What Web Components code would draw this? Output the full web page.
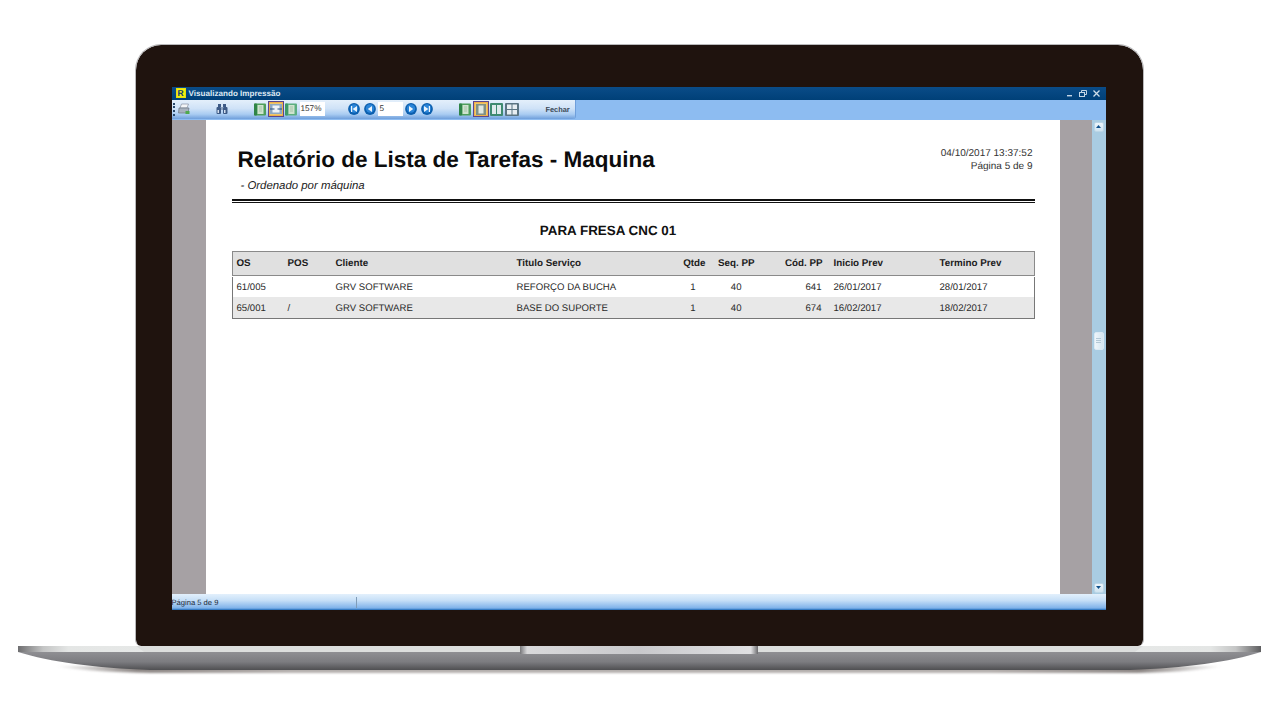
<!DOCTYPE html>
<html lang="pt">
<head>
<meta charset="utf-8">
<title>Visualizando Impressão</title>
<style>
  html, body { margin: 0; padding: 0; background: #fff; overflow: hidden; }
  body {
    width: 1280px;
    height: 720px;
    font-family: "Liberation Sans", Arial, sans-serif;
    text-rendering: geometricPrecision;
  }
</style>
</head>
<body>
<laptop-frame>
  <preview-window>
    <title-bar slot="title" label="Visualizando Impressão"></title-bar>
    <print-toolbar slot="toolbar"></print-toolbar>
    <report-page>
      <report-table></report-table>
    </report-page>
    <status-bar slot="status" text="Página 5 de 9"></status-bar>
  </preview-window>
</laptop-frame>

<script>
// Laptop body: bezel holding the screen, silver base under it
class LaptopFrame extends HTMLElement {
  constructor() {
    super();
    this.attachShadow({ mode: "open" });
    this.shadowRoot.innerHTML = `
      <style>
        :host { display: block; padding-top: 44px; }
        .bezel {
          box-sizing: border-box;
          width: 1009px;
          height: 602px;
          margin-left: 135px;
          padding: 43px 38px 0 37px;
          background: #1f130e;
          border: solid #b9b9bb;
          border-width: 1.5px 1.5px 0 1.5px;
          border-radius: 26px 26px 6px 6px;
          background-clip: padding-box;
        }
        .inner { margin: -1.5px -1.5px 0 -1.5px; }
        svg { display: block; }
      </style>
      <div class="bezel"><div class="inner"><slot></slot></div></div>
      <svg width="1280" height="30" viewBox="0 0 1280 30">
        <defs>
          <linearGradient id="body" x1="0" y1="0" x2="0" y2="1">
            <stop offset="0" stop-color="#8f8f93"/>
            <stop offset="0.55" stop-color="#7c7c80"/>
            <stop offset="1" stop-color="#4f4f52"/>
          </linearGradient>
          <linearGradient id="endL" x1="0" y1="0" x2="1" y2="0">
            <stop offset="0" stop-color="#6e6e70"/>
            <stop offset="0.2" stop-color="#c4c5c5"/>
            <stop offset="0.4" stop-color="#e4e6e5"/>
            <stop offset="1" stop-color="#e6e8e7"/>
          </linearGradient>
          <linearGradient id="endR" x1="1" y1="0" x2="0" y2="0">
            <stop offset="0" stop-color="#5e5e60"/>
            <stop offset="0.2" stop-color="#c4c5c5"/>
            <stop offset="0.4" stop-color="#e4e6e5"/>
            <stop offset="1" stop-color="#e6e8e7"/>
          </linearGradient>
          <linearGradient id="notch" x1="0" y1="0" x2="1" y2="0">
            <stop offset="0" stop-color="#77777a"/>
            <stop offset="0.03" stop-color="#d9d9db"/>
            <stop offset="0.5" stop-color="#c9c9cc"/>
            <stop offset="0.97" stop-color="#e0e0e2"/>
            <stop offset="1" stop-color="#6c6c6f"/>
          </linearGradient>
          <linearGradient id="shade" x1="0" y1="0" x2="1" y2="0">
            <stop offset="0" stop-color="#8d8785" stop-opacity="0"/>
            <stop offset="0.07" stop-color="#8d8785"/>
            <stop offset="0.2" stop-color="#b5b0ae"/>
            <stop offset="0.8" stop-color="#b5b0ae"/>
            <stop offset="0.93" stop-color="#8d8785"/>
            <stop offset="1" stop-color="#8d8785" stop-opacity="0"/>
          </linearGradient>
          <filter id="soft" x="-5%" y="-100%" width="110%" height="300%">
            <feGaussianBlur stdDeviation="1.2"/>
          </filter>
        </defs>
        <path d="M55 20 H1223 Q1190 27 1120 27 H170 Q90 27 55 20 Z" fill="url(#shade)" filter="url(#soft)"/>
        <path d="M18 6 C50 16 95 22 150 24 H1130 C1185 22 1230 16 1261 6 Z" fill="url(#body)"/>
        <rect x="136" y="0" width="1007" height="6" fill="#dcdedd"/>
        <path d="M18 0 H136 L144 6 H18 Z" fill="url(#endL)"/>
        <path d="M1261 0 H1143 L1135 6 H1261 Z" fill="url(#endR)"/>
        <rect x="520" y="0" width="238" height="8" fill="url(#notch)"/>
      </svg>
    `;
  }
}

// Windows style preview window: title, toolbar, page area and status
class PreviewWindow extends HTMLElement {
  constructor() {
    super();
    this.attachShadow({ mode: "open" });
    this.shadowRoot.innerHTML = `
      <style>
        :host {
          display: flex;
          flex-direction: column;
          width: 934px;
          height: 523px;
        }
        .middle { flex: 1; display: flex; min-height: 0; }
        .area { flex: 1; display: flex; justify-content: center; background: #a6a1a4; }
        .scroll {
          box-sizing: border-box;
          width: 14px;
          padding: 2px 2px 1px;
          display: flex;
          flex-direction: column;
          justify-content: space-between;
          background: #a9cce2;
          position: relative;
        }
        .btn {
          box-sizing: border-box;
          height: 10px;
          background: linear-gradient(#eef6fb, #cfe3f0);
          border: 1px solid #bcd6e6;
          border-radius: 2px;
          display: flex;
          align-items: center;
          justify-content: center;
        }
        .thumb {
          position: absolute;
          top: 212px;
          left: 2px;
          box-sizing: border-box;
          width: 10px;
          height: 18px;
          background: linear-gradient(90deg, #eef5fa, #d5e6f1);
          border: 1px solid #dbe9f3;
          border-radius: 2px;
          display: flex;
          flex-direction: column;
          gap: 1px;
          align-items: center;
          justify-content: center;
        }
        .thumb i { display: block; width: 5px; height: 1px; background: #b3c8d6; }
      </style>
      <slot name="title"></slot>
      <slot name="toolbar"></slot>
      <div class="middle">
        <div class="area"><slot></slot></div>
        <div class="scroll">
          <div class="btn"><svg width="5" height="3"><path d="M2.5 0 L5 3 H0 Z" fill="#0e4f8a"/></svg></div>
          <div class="thumb"><i></i><i></i><i></i></div>
          <div class="btn"><svg width="5" height="3"><path d="M0 0 H5 L2.5 3 Z" fill="#0e4f8a"/></svg></div>
        </div>
      </div>
      <slot name="status"></slot>
    `;
  }
}

class TitleBar extends HTMLElement {
  constructor() {
    super();
    this.attachShadow({ mode: "open" });
  }
  connectedCallback() {
    this.shadowRoot.innerHTML = `
      <style>
        :host {
          display: flex;
          align-items: center;
          height: 13px;
          padding: 0 5px 0 4px;
          background: linear-gradient(#0a4c88, #004078);
          color: #dfe9f3;
          font: bold 8.1px "Liberation Sans", Arial, sans-serif;
        }
        .logo {
          box-sizing: border-box;
          width: 10px;
          height: 10px;
          margin-right: 3px;
          background: #f2ee12;
          border: 1px solid #e6e20c;
          color: #0a3c70;
          font: bold 8.5px/8px "Liberation Sans", Arial, sans-serif;
          text-align: center;
          overflow: hidden;
        }
        .label { flex: 1; }
        .ctl { display: flex; gap: 6px; align-items: center; margin-right: 1px; }
        svg { display: block; }
      </style>
      <span class="logo">R</span>
      <span class="label">${this.getAttribute("label") || ""}</span>
      <span class="ctl">
        <svg width="7" height="7" viewBox="0 0 7 7"><rect x="1" y="5" width="5" height="1.4" fill="#c3d5e5"/></svg>
        <svg width="8" height="7" viewBox="0 0 8 7" fill="none" stroke="#c3d5e5"><rect x="0.5" y="2.5" width="5" height="4"/><path d="M2.5 2 V0.5 H7.5 V4.5 H6"/></svg>
        <svg width="7" height="7" viewBox="0 0 7 7" fill="none" stroke="#cfdeea" stroke-width="1.3"><path d="M0.5 0.5 L6.5 6.5 M6.5 0.5 L0.5 6.5"/></svg>
      </span>
    `;
  }
}

// Small toolbar icons, one function per kind
const pageIcon = (bg, edge) => `
  <svg width="12" height="13" viewBox="0 0 12 13">
    <rect x="0" y="0.5" width="12" height="12" rx="1" fill="${bg}"/>
    <rect x="0" y="0.5" width="3" height="12" rx="1" fill="${edge}"/>
    <rect x="3.5" y="2" width="6" height="9" fill="#cfe3cf"/>
    <path d="M5 4 H8 M5 6 H8 M5 8 H8" stroke="#8fae92" stroke-width="0.6"/>
  </svg>`;
const navIcon = (shape) => `
  <svg width="12" height="12" viewBox="0 0 12 12">
    <circle cx="6" cy="6" r="5.9" fill="#0c5fae"/>
    <circle cx="6" cy="5.5" r="4.2" fill="#2b85d8"/>
    <path d="${shape}" fill="#eaf4fc"/>
  </svg>`;

class PrintToolbar extends HTMLElement {
  constructor() {
    super();
    this.attachShadow({ mode: "open" });
    this.shadowRoot.innerHTML = `
      <style>
        :host {
          display: block;
          height: 20px;
          background: #8dbcf1;
        }
        .bar {
          box-sizing: border-box;
          width: 403px;
          height: 19px;
          display: flex;
          align-items: center;
          background: linear-gradient(#e4effb 0, #cfe2f7 45%, #a9ccf2 75%, #6f9fdb 100%);
          border-radius: 0 0 3px 0;
          box-shadow: 1px 0 0 #6f9fdb;
          color: #2b3a4a;
          font: 8px "Liberation Sans", Arial, sans-serif;
        }
        .grip { width: 0; height: 13px; margin-left: 1px; border-left: 2px dotted #28486a; }
        svg { display: block; flex: none; }
        .sel {
          box-sizing: border-box;
          width: 16px;
          height: 16px;
          display: flex;
          align-items: center;
          justify-content: center;
          background: #f0c66a;
          border: 1px solid #5a4690;
          box-shadow: inset 0 0 0 1px #eeb04a;
        }
        .field {
          box-sizing: border-box;
          height: 14px;
          width: 25px;
          background: #fff;
          color: #333;
          line-height: 14px;
          padding-left: 1px;
          font-size: 8.2px;
        }
        .close { margin-left: 27px; font-weight: bold; font-size: 7.4px; color: #3c4a58; }
        .ic { display: flex; }
      </style>
      <div class="bar">
        <span class="grip"></span>
        <svg style="margin-left:3px" width="12" height="12" viewBox="0 0 12 12">
          <path d="M3.5 1 H10.5 L9 5 H2 Z" fill="#f3f5f7" stroke="#8791a0" stroke-width="0.7"/>
          <path d="M1 5 H11 L10 10 H0.5 Z" fill="#a8b2be" stroke="#6a7684" stroke-width="0.7"/>
          <rect x="7.5" y="8" width="4" height="3" fill="#4faa4c"/>
        </svg>
        <svg style="margin-left:26px" width="12" height="12" viewBox="0 0 12 12" fill="#3d5a86">
          <rect x="2" y="1" width="3" height="3"/><rect x="7" y="1" width="3" height="3"/>
          <rect x="0.5" y="4" width="4.5" height="7" rx="1"/><rect x="7" y="4" width="4.5" height="7" rx="1"/>
          <rect x="5" y="4" width="2" height="3" fill="#8ea3bf"/>
          <rect x="1.5" y="7" width="1.5" height="3" fill="#d3dfee"/><rect x="8" y="7" width="1.5" height="3" fill="#d3dfee"/>
        </svg>
        <span class="ic" style="margin-left:26px">${pageIcon("#4f9e5c", "#2f8447")}</span>
        <span class="sel" style="margin-left:2px">
          <svg width="12" height="10" viewBox="0 0 12 10">
            <rect width="12" height="10" fill="#8ea8c2"/>
            <rect x="2.5" y="1.5" width="7" height="7" fill="#eef3f8"/>
            <path d="M0 5 H4.5 M7.5 5 H12" stroke="#2a5080" stroke-width="1.2"/>
          </svg>
        </span>
        <span class="ic" style="margin-left:1px">${pageIcon("#5cae80", "#3f9a68")}</span>
        <span class="field" style="margin-left:3px">157%</span>
        <span class="ic" style="margin-left:23px">${navIcon("M3 3 H4.2 V9 H3 Z M9 3 V9 L4.6 6 Z")}</span>
        <span class="ic" style="margin-left:4px">${navIcon("M8 3 V9 L3.8 6 Z")}</span>
        <span class="field" style="margin-left:2px;padding-left:2px">5</span>
        <span class="ic" style="margin-left:2px">${navIcon("M4 3 V9 L8.2 6 Z")}</span>
        <span class="ic" style="margin-left:4px">${navIcon("M3 3 V9 L7.4 6 Z M7.8 3 H9 V9 H7.8 Z")}</span>
        <span class="ic" style="margin-left:26px">${pageIcon("#4f9e5c", "#2f8447")}</span>
        <span class="sel" style="margin-left:2px">
          <svg width="10" height="11" viewBox="0 0 10 11">
            <rect width="10" height="11" fill="#7f9186"/>
            <rect x="2.5" y="1.5" width="5" height="8" fill="#dfe8e2"/>
          </svg>
        </span>
        <svg style="margin-left:1px" width="13" height="13" viewBox="0 0 13 13">
          <rect width="13" height="13" rx="1" fill="#3f8a70"/>
          <rect x="2" y="2" width="4" height="9" fill="#dfeaec"/><rect x="7" y="2" width="4" height="9" fill="#dfeaec"/>
        </svg>
        <svg style="margin-left:2px" width="14" height="13" viewBox="0 0 14 13">
          <rect width="14" height="13" rx="1" fill="#5b7482"/>
          <rect x="2" y="1.5" width="4.5" height="4.5" fill="#e8eef2"/><rect x="7.5" y="1.5" width="4.5" height="4.5" fill="#e8eef2"/>
          <rect x="2" y="7" width="4.5" height="4.5" fill="#e8eef2"/><rect x="7.5" y="7" width="4.5" height="4.5" fill="#e8eef2"/>
        </svg>
        <span class="close">Fechar</span>
      </div>
    `;
  }
}

// The white report sheet with heading block
class ReportPage extends HTMLElement {
  constructor() {
    super();
    this.attachShadow({ mode: "open" });
    this.shadowRoot.innerHTML = `
      <style>
        :host {
          display: block;
          box-sizing: border-box;
          width: 854px;
          margin-right: 32px;
          margin-left: 34px;
          padding: 0 26px;
          background: #fff;
          color: #111;
          font-family: "Liberation Sans", Arial, sans-serif;
        }
        .head { display: flex; justify-content: space-between; height: 79px; }
        h1 { margin: 27px 0 0 6px; font-size: 22.5px; line-height: 26px; font-weight: bold; color: #0c0c0c; }
        .sub { margin: 7px 0 0 9px; font-size: 11.4px; line-height: 13px; font-style: italic; color: #222; }
        .meta { margin: 27px 1px 0 0; font-size: 10px; line-height: 13px; text-align: right; color: #333; }
        .rule { box-sizing: border-box; height: 4px; margin-right: -1px; border-top: 2px solid #111; border-bottom: 1px solid #111; }
        h2 { margin: 20px 0 12px; padding-right: 49px; font-size: 13.4px; line-height: 16px; text-align: center; color: #111; }
      </style>
      <div class="head">
        <div>
          <h1>Relatório de Lista de Tarefas - Maquina</h1>
          <div class="sub">- Ordenado por máquina</div>
        </div>
        <div class="meta">04/10/2017 13:37:52<br>Página 5 de 9</div>
      </div>
      <div class="rule"></div>
      <h2>PARA FRESA CNC 01</h2>
      <slot></slot>
    `;
  }
}

class ReportTable extends HTMLElement {
  constructor() {
    super();
    this.attachShadow({ mode: "open" });
    const rows = [
      ["61/005", "", "GRV SOFTWARE", "REFORÇO DA BUCHA", "1", "40", "641", "26/01/2017", "28/01/2017"],
      ["65/001", "/", "GRV SOFTWARE", "BASE DO SUPORTE", "1", "40", "674", "16/02/2017", "18/02/2017"],
    ];
    const heads = ["OS", "POS", "Cliente", "Titulo Serviço", "Qtde", "Seq. PP", "Cód. PP", "Inicio Prev", "Termino Prev"];
    this.shadowRoot.innerHTML = `
      <style>
        :host {
          display: block;
          width: 803px;
          color: #2a2a2a;
          font: 9.6px "Liberation Sans", Arial, sans-serif;
        }
        .row {
          display: grid;
          grid-template-columns: 55px 48px 181px 154px 35px 49px 68px 11px 106px 1fr;
          align-items: center;
        }
        .row > span:first-child { padding-left: 4px; }
        .num { text-align: right; }
        .head {
          height: 25px;
          box-sizing: border-box;
          background: #e0e0e0;
          border: 1px solid #8a8a8a;
          margin-bottom: 1px;
          font-weight: bold;
          font-size: 9.8px;
          color: #1c1c1c;
        }
        .body { border: solid #777; border-width: 0 1px 1px 1px; }
        .body .row { box-sizing: border-box; height: 20px; padding-top: 2px; }
        .body .row:nth-child(2) { height: 21px; background: #e8e8e8; }
        .qt { padding-right: 10px; }
        .sq { padding-right: 13px; }
        .cd { padding-right: 1px; }
      </style>
      <div class="row head">
        ${heads.map((h, i) => `<span class="${i >= 4 && i <= 6 ? "num" : ""}">${h}</span>${i === 6 ? "<span></span>" : ""}`).join("")}
      </div>
      <div class="body">
        ${rows.map((r) => `<div class="row">
          ${r.map((c, i) => `<span class="${["", "", "", "", "num qt", "num sq", "num cd", "", ""][i]}">${c}</span>${i === 6 ? "<span></span>" : ""}`).join("")}
        </div>`).join("")}
      </div>
    `;
  }
}

class StatusBar extends HTMLElement {
  constructor() {
    super();
    this.attachShadow({ mode: "open" });
  }
  connectedCallback() {
    this.shadowRoot.innerHTML = `
      <style>
        :host {
          display: flex;
          align-items: center;
          box-sizing: border-box;
          height: 16px;
          padding-top: 2px;
          background: linear-gradient(#e3f0fc 0, #c6dff7 40%, #7fb2ea 88%, #1f6ab8 100%);
          color: #1c2a3a;
          font: 7.6px "Liberation Sans", Arial, sans-serif;
        }
        .cell { width: 184px; height: 11px; line-height: 11px; border-right: 1px solid #7f9cb8; }
      </style>
      <div class="cell">${this.getAttribute("text") || ""}</div>
    `;
  }
}

customElements.define("laptop-frame", LaptopFrame);
customElements.define("preview-window", PreviewWindow);
customElements.define("title-bar", TitleBar);
customElements.define("print-toolbar", PrintToolbar);
customElements.define("report-page", ReportPage);
customElements.define("report-table", ReportTable);
customElements.define("status-bar", StatusBar);
</script>
</body>
</html>
